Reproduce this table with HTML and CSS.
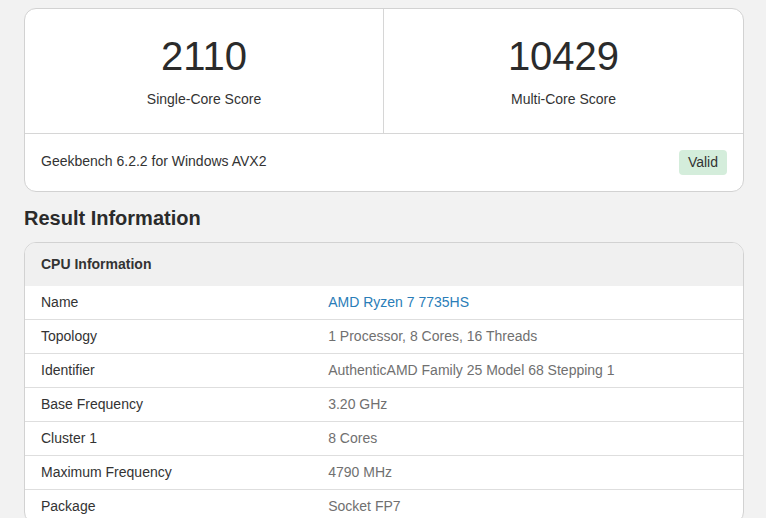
FILE: index.html
```html
<!DOCTYPE html>
<html>
<head>
<meta charset="utf-8">
<link rel="stylesheet" href="styles.css">
</head>
<body>
<div class="page">
  <div class="card score-card">
    <div class="scores">
      <div class="score">
        <div class="score-num">2110</div>
        <div class="score-label">Single-Core Score</div>
      </div>
      <div class="score">
        <div class="score-num">10429</div>
        <div class="score-label">Multi-Core Score</div>
      </div>
    </div>
    <div class="score-footer">
      <span class="version">Geekbench 6.2.2 for Windows AVX2</span>
      <span class="badge">Valid</span>
    </div>
  </div>

  <h2 class="section-title">Result Information</h2>

  <div class="card info-card">
    <div class="info-head">CPU Information</div>
    <div class="row"><div class="k">Name</div><div class="v"><a class="link" href="#">AMD Ryzen 7 7735HS</a></div></div>
    <div class="row"><div class="k">Topology</div><div class="v">1 Processor, 8 Cores, 16 Threads</div></div>
    <div class="row"><div class="k">Identifier</div><div class="v">AuthenticAMD Family 25 Model 68 Stepping 1</div></div>
    <div class="row"><div class="k">Base Frequency</div><div class="v">3.20 GHz</div></div>
    <div class="row"><div class="k">Cluster 1</div><div class="v">8 Cores</div></div>
    <div class="row"><div class="k">Maximum Frequency</div><div class="v">4790 MHz</div></div>
    <div class="row"><div class="k">Package</div><div class="v">Socket FP7</div></div>
  </div>
</div>
</body>
</html>
```

FILE: styles.css
```css
html, body {
  margin: 0;
  padding: 0;
  background: #f2f2f2;
  font-family: "Liberation Sans", Arial, sans-serif;
  color: #333;
  overflow: hidden;
}
.page {
  padding: 8px 22px 0 24px;
  width: 720px;
}
.card {
  background: #fff;
  border: 1px solid #d2d2d2;
  border-radius: 12px;
  overflow: hidden;
}
.scores {
  display: grid;
  grid-template-columns: 358px 1fr;
  border-bottom: 1px solid #d6d6d6;
}
.score {
  text-align: center;
  padding: 27px 0 23px;
  height: 74px;
}
.score + .score {
  border-left: 1px solid #d6d6d6;
}
.score-num {
  font-size: 40px;
  line-height: 40px;
  color: #2b2b2b;
}
.score-label {
  font-size: 14px;
  line-height: 20px;
  margin-top: 13px;
  color: #333;
}
.score-footer {
  display: flex;
  justify-content: space-between;
  align-items: center;
  padding: 16px;
  font-size: 14px;
  color: #333;
}
.version {
  margin-top: -3px;
}
.badge {
  background: #d4eddb;
  color: #333;
  border-radius: 4px;
  height: 25px;
  line-height: 25px;
  padding: 0 9px;
  font-size: 14px;
}
.section-title {
  font-size: 20px;
  font-weight: bold;
  line-height: 24px;
  margin: 14px 0 12px;
  color: #2b2b2b;
}
.info-head {
  background: #f0f0f0;
  height: 43px;
  line-height: 43px;
  padding: 0 16px;
  font-size: 14px;
  font-weight: bold;
}
.row {
  display: grid;
  grid-template-columns: 40% 60%;
  height: 33px;
  line-height: 32px;
  font-size: 14px;
}
.row + .row {
  border-top: 1px solid #dedede;
}
.k {
  padding-left: 16px;
  color: #333;
}
.v {
  padding-left: 16px;
  color: #707070;
}
.link {
  color: #2a7db8;
  text-decoration: none;
}
```
